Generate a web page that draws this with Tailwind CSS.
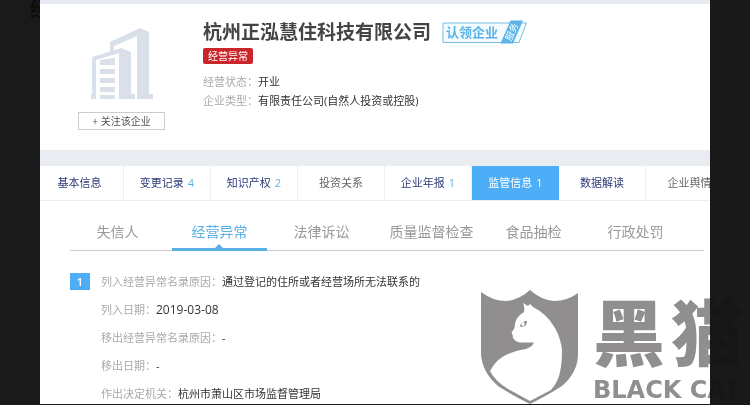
<!DOCTYPE html>
<html lang="zh-CN">
<head>
<meta charset="utf-8">
<meta name="viewport" content="width=device-width, initial-scale=1">
<title>杭州正泓慧住科技有限公司</title>
<script src="https://cdn.jsdelivr.net/npm/@tailwindcss/browser@4"></script>
</head>
<body class="relative flex min-h-screen flex-col overflow-hidden bg-[#1a1a1a] px-10 pb-px font-['Open_Sans','Noto_Sans_CJK_SC',sans-serif] text-[11px] text-[#333]">
  <div class="absolute top-0 left-0 w-10 overflow-hidden pl-[30px] text-xl leading-5 font-bold text-[#0d0d0d]" aria-hidden="true">经</div>

  <main class="flex grow flex-col overflow-hidden bg-white">
    <div class="h-1 bg-[#e9ebf4]"></div>

    <header class="flex h-[146px] gap-[38px] pl-[38px]">
      <div class="flex w-[87px] flex-col items-center pt-6">
        <svg class="h-[71px] w-[62px]" viewBox="0 0 62 71" fill="#dae0e9" aria-hidden="true">
          <path d="M19 24V14L49 0L58 4V66H62V71H46V8L23 18V22Z"/>
          <path d="M1 29L30 20L40 24V66H44V71H28V25L5 32V71H0V66H1Z"/>
          <path d="M9 32L24 30V37H9ZM9 41H24V46H9ZM9 50H24V55H9ZM9 59H24V64H9ZM9 67H24V71H9Z"/>
        </svg>
        <button class="mt-[13px] h-[18px] w-full border border-[#ccc] text-[10px] leading-4 text-[#555]">+ 关注该企业</button>
      </div>
      <div class="flex flex-col items-start">
        <div class="flex items-center gap-[11px] pt-3">
          <h1 class="text-[19px] leading-8 font-bold text-[#444]">杭州正泓慧住科技有限公司</h1>
          <a href="#" class="relative block h-6 w-[86px] text-[#5cb3e8]">
            <svg class="h-6 w-[86px]" viewBox="0 0 86 24" aria-hidden="true">
              <path d="M1 3H84.500L77 22.500H1Z" fill="#f3fbff" stroke="#78bde6"/>
              <path d="M68.500 .5H81L71 23.500H58.500Z" fill="#5cb3e8"/>
            </svg>
            <span class="absolute top-1 left-1 text-[13px] leading-4 font-bold">认领企业</span>
            <span class="absolute top-[7px] left-[61px] -rotate-66 text-[9px] leading-[10px] text-white">服务</span>
          </a>
        </div>
        <span class="rounded-xs bg-[#c9252b] px-[5px] text-[10px] leading-4 text-white">经营异常</span>
        <dl class="mt-2 leading-[19px]">
          <div class="flex"><dt class="w-[55px] text-[#aaa]">经营状态：</dt><dd>开业</dd></div>
          <div class="flex"><dt class="w-[55px] text-[#aaa]">企业类型：</dt><dd>有限责任公司(自然人投资或控股)</dd></div>
        </dl>
      </div>
    </header>

    <div class="h-4 bg-[#e9ecf1]"></div>

    <nav class="flex h-[35px] overflow-hidden border-b border-[#eee] text-[#2d3b78]">
      <a href="#" class="flex w-[84px] shrink-0 items-center justify-center border-r border-[#eee] pr-1">基本信息</a>
      <a href="#" class="flex w-[87px] shrink-0 items-center justify-center gap-1 border-r border-[#eee]">变更记录 <span class="text-[#5cb0e8]">4</span></a>
      <a href="#" class="flex w-[87px] shrink-0 items-center justify-center gap-1 border-r border-[#eee]">知识产权 <span class="text-[#5cb0e8]">2</span></a>
      <a href="#" class="flex w-[87px] shrink-0 items-center justify-center border-r border-[#eee] text-[#666]">投资关系</a>
      <a href="#" class="flex w-[87px] shrink-0 items-center justify-center gap-1 border-r border-[#eee]">企业年报 <span class="text-[#5cb0e8]">1</span></a>
      <a href="#" class="flex w-[87px] shrink-0 items-center justify-center gap-1 bg-[#4eadf7] text-white" aria-current="page">监管信息 <span>1</span></a>
      <a href="#" class="flex w-[87px] shrink-0 items-center justify-center border-r border-[#eee]">数据解读</a>
      <a href="#" class="flex w-[87px] shrink-0 items-center justify-center text-[#666]">企业舆情</a>
    </nav>

    <nav class="mt-3 mr-[6px] ml-[30px] flex h-[38px] gap-[7px] border-b border-[#ccc] text-sm leading-[38px] text-[#999]">
      <a href="#" class="w-[95px] shrink-0 text-center">失信人</a>
      <a href="#" class="relative h-[38px] w-[95px] shrink-0 border-b-3 border-[#5aafe6] text-center text-[#5aafe6]" aria-current="page">经营异常
        <svg class="absolute bottom-0 left-[43px] h-1 w-2" viewBox="0 0 8 4" aria-hidden="true"><path d="M0 4L4 0L8 4Z" fill="#5aafe6"/></svg>
      </a>
      <a href="#" class="w-[95px] shrink-0 text-center">法律诉讼</a>
      <a href="#" class="w-[103px] shrink-0 pl-2 text-center">质量监督检查</a>
      <a href="#" class="w-[95px] shrink-0 text-center">食品抽检</a>
      <a href="#" class="w-[95px] shrink-0 text-center">行政处罚</a>
    </nav>

    <section class="flex gap-[11px] pt-[17px] pl-[30px]">
      <span class="mt-[5px] h-[17px] w-5 bg-[#4eadf7] text-center leading-[17px] font-semibold text-white">1</span>
      <dl class="leading-7">
        <div class="flex"><dt class="text-[#aaa]">列入经营异常名录原因：</dt><dd>通过登记的住所或者经营场所无法联系的</dd></div>
        <div class="flex"><dt class="text-[#aaa]">列入日期：</dt><dd class="text-xs leading-7">2019-03-08</dd></div>
        <div class="flex"><dt class="text-[#aaa]">移出经营异常名录原因：</dt><dd>-</dd></div>
        <div class="flex"><dt class="text-[#aaa]">移出日期：</dt><dd>-</dd></div>
        <div class="flex h-6"><dt class="text-[#aaa]">作出决定机关：</dt><dd>杭州市萧山区市场监督管理局</dd></div>
      </dl>
    </section>
  </main>

  <div class="pointer-events-none absolute top-[290px] left-[481px] flex gap-[14px] text-[#908e8f] mix-blend-multiply">
    <svg class="h-[114px] w-[98px] shrink-0" viewBox="0 0 98 114" aria-hidden="true">
      <path fill="#908e8f" d="M0 2Q12 11 25 11Q38 10 49 0Q60 10 73 11Q86 11 97 3V64Q97 82 81 96Q67 105 49 114Q31 105 17 96Q1 82 0 64Z"/>
      <path fill="#fff" d="M42 13L47 16L49 14L52 17Q66 24 74 38Q80 49 81 60Q81 73 79 82Q77 92 70 100L49 111L27 99Q14 91 9 81Q15 69 27 64Q36 60 45 59Q51 57 53 52.500H39Q35 52 32 48Q32 45 30.500 42Q34 39 34 34Q35 27 43 22Q44 17 42 13Z"/>
      <path fill="#908e8f" d="M39 36Q40 31 46 31Q46 37 40 37Z"/>
      <path fill="#fff" d="M42 31L44 34L42 37L40 34Z"/>
    </svg>
    <div class="whitespace-nowrap">
      <div class="flex h-[88px] gap-[6px] font-['Noto_Sans_CJK_SC',sans-serif] text-[72px] leading-[78px] font-black"><span>黑</span><span>猫</span></div>
      <div class="font-['DejaVu_Sans',sans-serif] text-2xl leading-6 font-bold">BLACK CAT</div>
    </div>
  </div>
  <div class="pointer-events-none absolute inset-y-0 right-0 w-10 bg-[#1a1a1a]/70"></div>
</body>
</html>
